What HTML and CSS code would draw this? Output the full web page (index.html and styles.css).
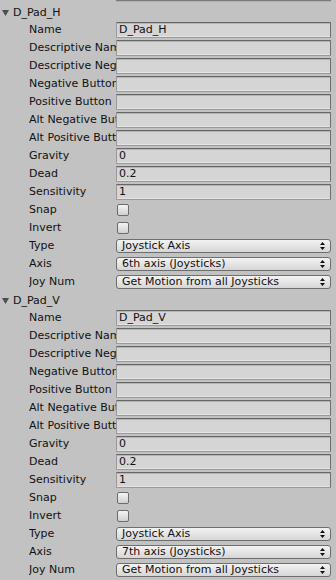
FILE: index.html
```html
<!DOCTYPE html>
<html>
<head>
<meta charset="utf-8">
<link rel="stylesheet" href="styles.css">
</head>
<body>
<div class="panel">
  <div class="tail"><div class="tail-bar"></div></div>

  <section class="axis">
    <div class="head"><svg class="tri" width="7" height="6" viewBox="0 0 7 6"><path d="M0 0H7L3.5 6Z"/></svg><span>D_Pad_H</span></div>
    <div class="row"><div class="label">Name</div><div class="field">D_Pad_H</div></div>
    <div class="row"><div class="label">Descriptive Name</div><div class="field"></div></div>
    <div class="row"><div class="label">Descriptive Negative Name</div><div class="field"></div></div>
    <div class="row"><div class="label">Negative Button</div><div class="field"></div></div>
    <div class="row"><div class="label">Positive Button</div><div class="field"></div></div>
    <div class="row"><div class="label">Alt Negative Button</div><div class="field"></div></div>
    <div class="row"><div class="label">Alt Positive Button</div><div class="field"></div></div>
    <div class="row"><div class="label">Gravity</div><div class="field">0</div></div>
    <div class="row"><div class="label">Dead</div><div class="field">0.2</div></div>
    <div class="row"><div class="label">Sensitivity</div><div class="field">1</div></div>
    <div class="row"><div class="label">Snap</div><div class="check"></div></div>
    <div class="row"><div class="label">Invert</div><div class="check"></div></div>
    <div class="row"><div class="label">Type</div><div class="popup"><span>Joystick Axis</span><svg class="arr" width="5" height="8" viewBox="0 0 5 8"><path d="M2.5 0L5 3H0Z M2.5 8L5 5H0Z"/></svg></div></div>
    <div class="row"><div class="label">Axis</div><div class="popup"><span>6th axis (Joysticks)</span><svg class="arr" width="5" height="8" viewBox="0 0 5 8"><path d="M2.5 0L5 3H0Z M2.5 8L5 5H0Z"/></svg></div></div>
    <div class="row"><div class="label">Joy Num</div><div class="popup"><span>Get Motion from all Joysticks</span><svg class="arr" width="5" height="8" viewBox="0 0 5 8"><path d="M2.5 0L5 3H0Z M2.5 8L5 5H0Z"/></svg></div></div>
  </section>

  <section class="axis">
    <div class="head"><svg class="tri" width="7" height="6" viewBox="0 0 7 6"><path d="M0 0H7L3.5 6Z"/></svg><span>D_Pad_V</span></div>
    <div class="row"><div class="label">Name</div><div class="field">D_Pad_V</div></div>
    <div class="row"><div class="label">Descriptive Name</div><div class="field"></div></div>
    <div class="row"><div class="label">Descriptive Negative Name</div><div class="field"></div></div>
    <div class="row"><div class="label">Negative Button</div><div class="field"></div></div>
    <div class="row"><div class="label">Positive Button</div><div class="field"></div></div>
    <div class="row"><div class="label">Alt Negative Button</div><div class="field"></div></div>
    <div class="row"><div class="label">Alt Positive Button</div><div class="field"></div></div>
    <div class="row"><div class="label">Gravity</div><div class="field">0</div></div>
    <div class="row"><div class="label">Dead</div><div class="field">0.2</div></div>
    <div class="row"><div class="label">Sensitivity</div><div class="field">1</div></div>
    <div class="row"><div class="label">Snap</div><div class="check"></div></div>
    <div class="row"><div class="label">Invert</div><div class="check"></div></div>
    <div class="row"><div class="label">Type</div><div class="popup"><span>Joystick Axis</span><svg class="arr" width="5" height="8" viewBox="0 0 5 8"><path d="M2.5 0L5 3H0Z M2.5 8L5 5H0Z"/></svg></div></div>
    <div class="row"><div class="label">Axis</div><div class="popup"><span>7th axis (Joysticks)</span><svg class="arr" width="5" height="8" viewBox="0 0 5 8"><path d="M2.5 0L5 3H0Z M2.5 8L5 5H0Z"/></svg></div></div>
    <div class="row"><div class="label">Joy Num</div><div class="popup"><span>Get Motion from all Joysticks</span><svg class="arr" width="5" height="8" viewBox="0 0 5 8"><path d="M2.5 0L5 3H0Z M2.5 8L5 5H0Z"/></svg></div></div>
  </section>
</div>
</body>
</html>
```
FILE: styles.css
```css
html, body {
  margin: 0;
  padding: 0;
  background: #c2c2c2;
}
.panel {
  width: 336px;
  height: 580px;
  overflow: hidden;
  font-family: "DejaVu Sans", sans-serif;
  font-size: 11px;
  color: #111;
}
.tail {
  height: 3px;
  padding-left: 116px;
  padding-right: 5px;
}
.tail-bar {
  height: 2px;
  background: #7a7a7a;
  border-bottom: 1px solid #b0b0b0;
  box-sizing: border-box;
}
.head {
  height: 18px;
  display: flex;
  align-items: center;
  padding-left: 2px;
  gap: 4px;
}
.tri {
  fill: #4e4e4e;
  margin-top: 1px;
}
.row {
  height: 18px;
  display: grid;
  grid-template-columns: 87px 215px;
  padding-left: 29px;
  align-items: center;
}
.label {
  white-space: nowrap;
  overflow: hidden;
  line-height: 18px;
}
.field {
  height: 16px;
  box-sizing: border-box;
  background: #d5d5d5;
  border: 1px solid #9a9a9a;
  border-top-color: #666;
  border-right-color: #6e6e6e;
  box-shadow: inset 0 1px 0 #b4b4b4, inset 0 -1px 0 #e4e4e4;
  border-radius: 1px;
  padding-left: 2px;
  line-height: 14px;
  white-space: nowrap;
  overflow: hidden;
}
.check {
  width: 12px;
  height: 12px;
  box-sizing: border-box;
  margin-left: 1px;
  border: 1px solid #6c6c6c;
  border-radius: 2px;
  background: linear-gradient(#f4f4f4, #d0d0d0);
}
.popup {
  height: 14px;
  box-sizing: border-box;
  border: 1px solid #6e6e6e;
  border-radius: 3px;
  background: linear-gradient(#f3f3f3, #d6d6d6);
  display: flex;
  align-items: center;
  justify-content: space-between;
  padding: 0 5px 0 5px;
  line-height: 12px;
  white-space: nowrap;
}
.arr {
  fill: #111;
}
```
